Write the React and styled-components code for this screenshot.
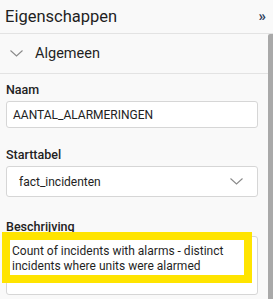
import React from "react";
import styled, { createGlobalStyle } from "styled-components";

const GlobalStyle = createGlobalStyle`
  html, body {
    margin: 0;
    padding: 0;
    background: #f9f9f9;
  }
  body {
    font-family: Roboto, "Open Sans", sans-serif;
    color: #222;
  }
`;

const Panel = styled.div`
  width: 273px;
  height: 299px;
  display: flex;
  flex-direction: column;
  overflow: hidden;
  background: #f9f9f9;
`;

const Header = styled.div`
  height: 34px;
  flex-shrink: 0;
  display: flex;
  align-items: center;
  justify-content: space-between;
  padding: 0 7px 1px 5px;
  border-bottom: 1px solid #e3e3e3;
  box-sizing: border-box;
`;

const Title = styled.h2`
  margin: 0;
  font-size: 16.5px;
  font-weight: 400;
  color: #1f1f1f;
`;

const Collapse = styled.span`
  font-size: 15px;
  font-weight: 700;
  color: #2f3d5c;
  line-height: 1;
`;

const Body = styled.div`
  flex: 1;
  display: flex;
  min-height: 0;
`;

const Content = styled.div`
  flex: 1;
  min-width: 0;
`;

const Scrollbar = styled.div`
  width: 5px;
  background: #a9a9a9;
  border-radius: 2px 0 0 0;
`;

const SectionHead = styled.div`
  height: 40px;
  display: flex;
  align-items: center;
  gap: 12px;
  padding-left: 10px;
  border-bottom: 1px solid #e3e3e3;
  box-sizing: border-box;
  font-size: 14.5px;
  color: #1f1f1f;
`;

const Fields = styled.div`
  padding: 7px 10px 0 6px;
  display: flex;
  flex-direction: column;
`;

const Field = styled.div`
  display: flex;
  flex-direction: column;
  gap: ${(p) => p.$gap ?? 3}px;
  margin-bottom: ${(p) => p.$space || 0}px;
`;

const Label = styled.label`
  font-size: 12.5px;
  line-height: 17px;
  font-weight: 500;
  color: #222;
`;

const Input = styled.div`
  height: 27px;
  box-sizing: border-box;
  background: #fff;
  border: 1px solid #d6d6d6;
  border-radius: 3px;
  padding: 0 6px;
  display: flex;
  align-items: center;
  font-size: 12px;
  color: #222;
`;

const Select = styled(Input)`
  height: 31px;
  justify-content: space-between;
  padding: 0 14px 0 12px;
`;

const AreaWrap = styled.div`
  position: relative;
`;

const Area = styled.div`
  height: 59px;
  box-sizing: border-box;
  background: #fff;
  border: 1px solid #d6d6d6;
  border-radius: 3px;
`;

const Highlight = styled.div`
  position: absolute;
  left: -4px;
  top: -4px;
  width: 250px;
  height: 51px;
  box-sizing: border-box;
  border: 8px solid #ffe400;
  background: #fff;
  padding: 4px 2px 0;
  font-size: 12px;
  line-height: 15px;
  color: #1f1f1f;
`;

const Chevron = ({ color = "#777" }) => (
  <svg width="13" height="7" viewBox="0 0 13 7" fill="none">
    <path d="M0.5 0.5 L6.5 6 L12.5 0.5" stroke={color} strokeWidth="1.1" />
  </svg>
);

export default function App() {
  return (
    <>
      <GlobalStyle />
      <Panel>
        <Header>
          <Title>Eigenschappen</Title>
          <Collapse>»</Collapse>
        </Header>
        <Body>
          <Content>
            <SectionHead>
              <Chevron color="#8a8a8a" />
              <span>Algemeen</span>
            </SectionHead>
            <Fields>
              <Field $space={18}>
                <Label>Naam</Label>
                <Input>AANTAL_ALARMERINGEN</Input>
              </Field>
              <Field $space={21}>
                <Label>Starttabel</Label>
                <Select>
                  <span>fact_incidenten</span>
                  <Chevron color="#8a8a8a" />
                </Select>
              </Field>
              <Field $gap={1}>
                <Label>Beschrijving</Label>
                <AreaWrap>
                  <Area />
                  <Highlight>
                    Count of incidents with alarms - distinct incidents where units were alarmed
                  </Highlight>
                </AreaWrap>
              </Field>
            </Fields>
          </Content>
          <Scrollbar />
        </Body>
      </Panel>
    </>
  );
}
